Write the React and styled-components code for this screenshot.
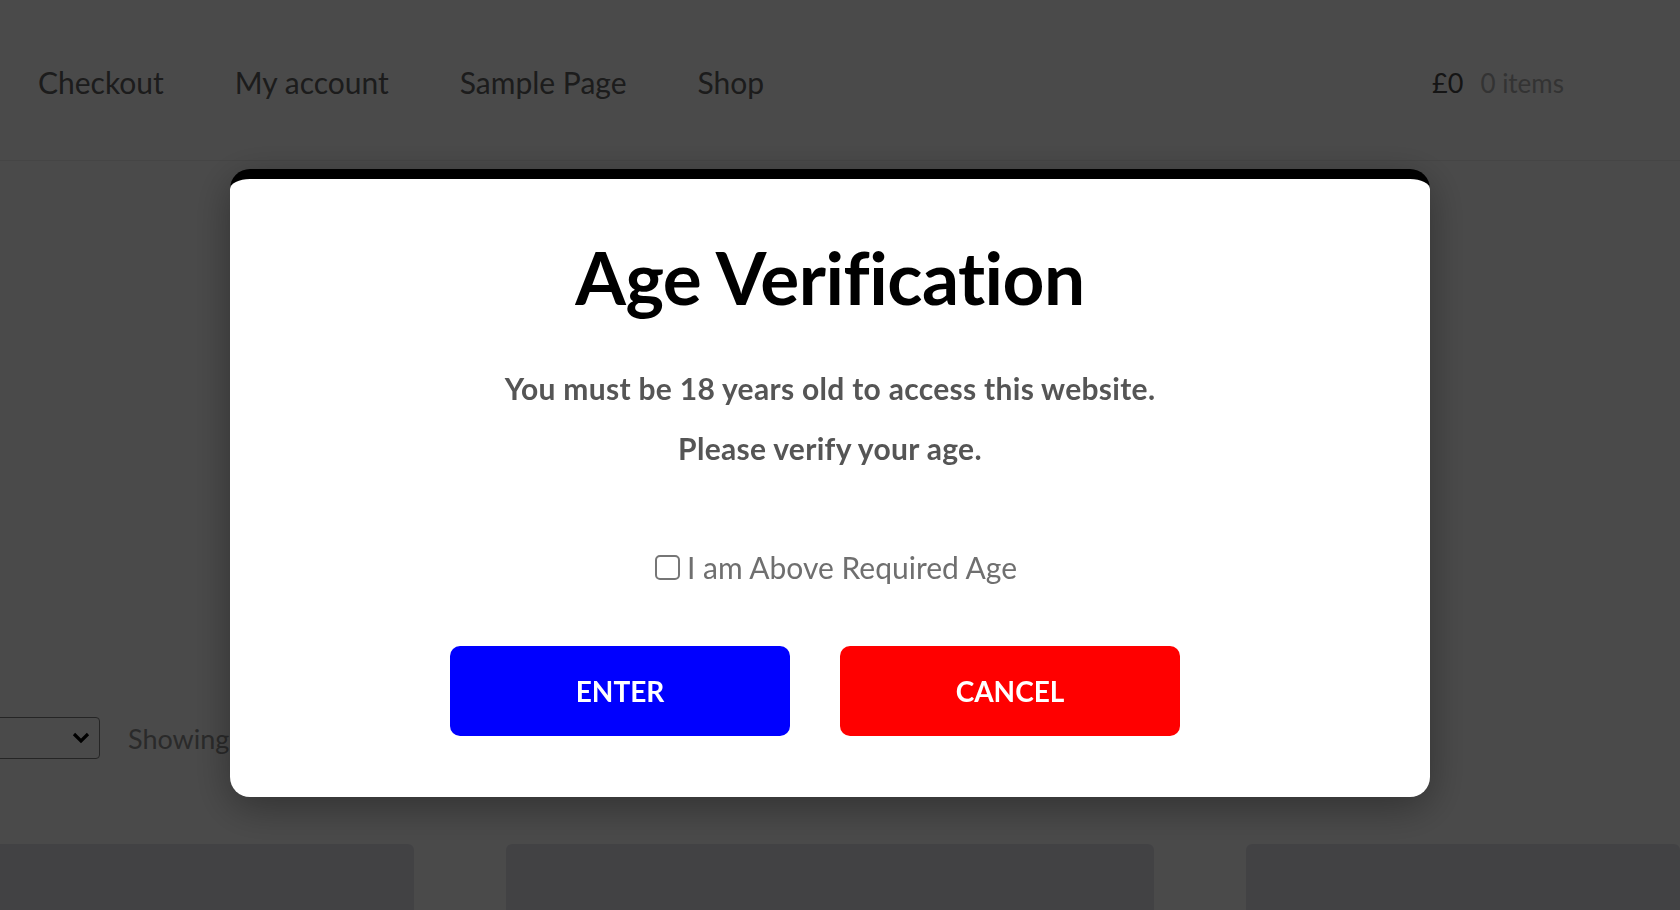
import React, { useState } from "react";
import styled, { createGlobalStyle } from "styled-components";

const GlobalStyle = createGlobalStyle`
  html, body { margin: 0; padding: 0; }
  body {
    background: #ffffff;
    font-family: Lato, "Liberation Sans", sans-serif;
    overflow: hidden;
  }
  * { box-sizing: border-box; }
`;

const Page = styled.div`
  width: 1680px;
  height: 910px;
  overflow: hidden;
  background: #ffffff;
`;

const Header = styled.header`
  height: 161px;
  display: flex;
  align-items: center;
  padding: 4px 116px 0 38px;
  border-bottom: 1px solid #eeeeee;
`;

const Nav = styled.nav`
  display: flex;
  gap: 71px;
`;

const NavLink = styled.a`
  font-size: 30px;
  color: #616161;
  text-decoration: none;
`;

const Cart = styled.div`
  margin-left: auto;
  display: flex;
  align-items: baseline;
  gap: 17px;
`;

const Price = styled.span`
  font-size: 27px;
  color: #484848;
`;

const Items = styled.span`
  font-size: 26px;
  color: #b0b0b0;
`;

const Toolbar = styled.div`
  margin-top: 556px;
  display: flex;
  align-items: center;
  gap: 28px;
  margin-left: -40px;
`;

const SelectBox = styled.div`
  width: 140px;
  height: 42px;
  border: 1.5px solid #808080;
  border-radius: 4px;
  display: flex;
  align-items: center;
  justify-content: flex-end;
  padding-right: 8px;
`;

const ShowingText = styled.span`
  font-size: 27px;
  color: #919191;
`;

const Cards = styled.div`
  margin-top: 85px;
  display: grid;
  grid-template-columns: 414px 648px 1fr;
  gap: 92px;
`;

const Card = styled.div`
  height: 300px;
  background: #e4e4ea;
  border-radius: 6px;
  margin-left: ${(p) => (p.$first ? "-20px" : "0")};
`;

const Overlay = styled.div`
  position: fixed;
  inset: 0;
  background: rgba(0, 0, 0, 0.71);
  display: flex;
  justify-content: center;
  align-items: flex-start;
  padding: 169px 20px 0 0;
`;

const Modal = styled.div`
  width: 1200px;
  height: 628px;
  background: #ffffff;
  border-top: 10px solid #000000;
  border-radius: 20px;
  box-shadow: 0 10px 40px rgba(0, 0, 0, 0.35);
  display: flex;
  flex-direction: column;
  align-items: center;
  text-align: center;
  padding-top: 50px;
`;

const Title = styled.h1`
  margin: 0;
  font-size: 73px;
  font-weight: 700;
  color: #000000;
  line-height: 96px;
  letter-spacing: -0.5px;
`;

const Message = styled.p`
  margin: 0;
  font-size: 30px;
  font-weight: 700;
  color: #555555;
  line-height: 60px;
  letter-spacing: 0.3px;
`;

const Messages = styled.div`
  margin-top: 33px;
`;

const CheckRow = styled.label`
  margin-top: 71px;
  margin-left: 12px;
  display: flex;
  align-items: center;
  gap: 7px;
  font-size: 30px;
  color: #6f6f6f;
  line-height: 36px;
  cursor: pointer;
`;

const CheckBox = styled.span`
  width: 25px;
  height: 25px;
  border: 2px solid #767676;
  border-radius: 5px;
  background: ${(p) => (p.$checked ? "#0075ff" : "#ffffff")};
  display: inline-block;
`;

const HiddenInput = styled.input`
  display: none;
`;

const Buttons = styled.div`
  margin-top: 61px;
  display: flex;
  gap: 50px;
  padding-right: 30px;
`;

const Button = styled.button`
  width: 340px;
  height: 90px;
  border: none;
  border-radius: 10px;
  background: ${(p) => p.$bg};
  color: #ffffff;
  font-family: Lato, "Liberation Sans", sans-serif;
  font-size: 28px;
  font-weight: 700;
  cursor: pointer;
`;

export default function App() {
  const [checked, setChecked] = useState(false);
  return (
    <>
      <GlobalStyle />
      <Page>
        <Header>
          <Nav>
            <NavLink href="#">Checkout</NavLink>
            <NavLink href="#">My account</NavLink>
            <NavLink href="#">Sample Page</NavLink>
            <NavLink href="#">Shop</NavLink>
          </Nav>
          <Cart>
            <Price>£0</Price>
            <Items>0 items</Items>
          </Cart>
        </Header>
        <Toolbar>
          <SelectBox>
            <svg width="20" height="14" viewBox="0 0 20 14">
              <path d="M3 3 L10 10 L17 3" fill="none" stroke="#000" strokeWidth="3.2" />
            </svg>
          </SelectBox>
          <ShowingText>Showing all 9 results</ShowingText>
        </Toolbar>
        <Cards>
          <Card $first />
          <Card />
          <Card />
        </Cards>
      </Page>
      <Overlay>
        <Modal>
          <Title>Age Verification</Title>
          <Messages>
            <Message>You must be 18 years old to access this website.</Message>
            <Message>Please verify your age.</Message>
          </Messages>
          <CheckRow>
            <HiddenInput
              type="checkbox"
              checked={checked}
              onChange={(e) => setChecked(e.target.checked)}
            />
            <CheckBox $checked={checked} />
            I am Above Required Age
          </CheckRow>
          <Buttons>
            <Button $bg="#0000ff">ENTER</Button>
            <Button $bg="#ff0000">CANCEL</Button>
          </Buttons>
        </Modal>
      </Overlay>
    </>
  );
}
